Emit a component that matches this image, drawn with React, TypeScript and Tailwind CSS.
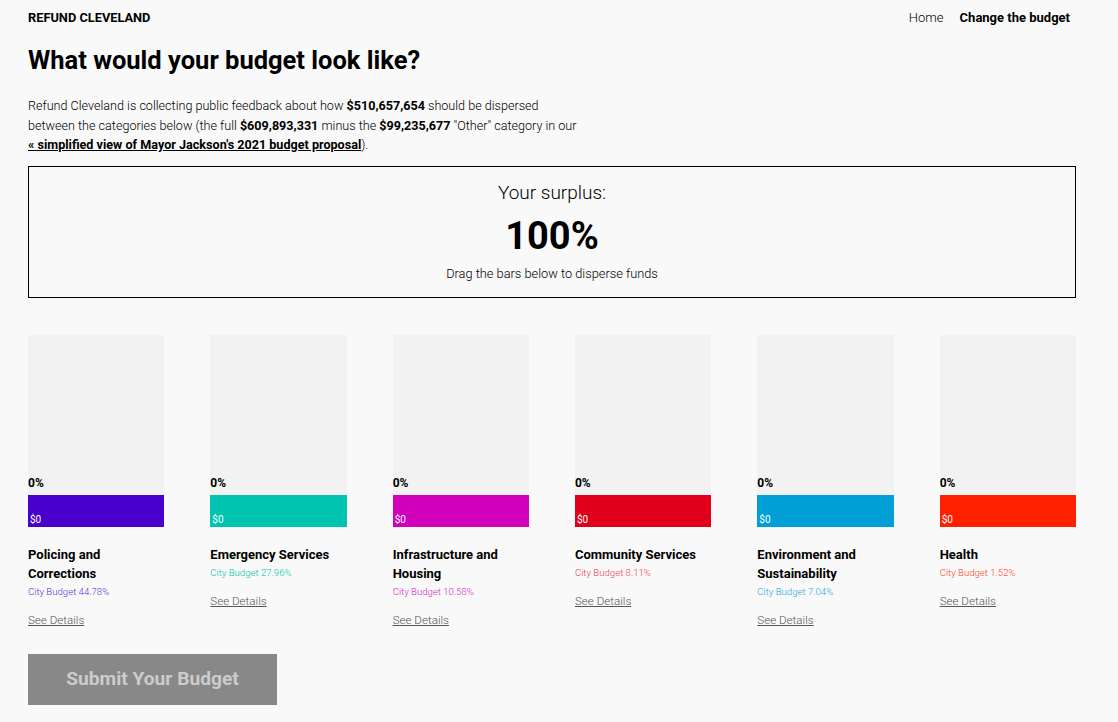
import React from "react";

interface Category {
  name: string;
  share: string;
  color: string;
  text: string;
}

const categories: Category[] = [
  { name: "Policing and Corrections", share: "44.78%", color: "bg-[#4a00cc]", text: "text-[#5b2ee0]" },
  { name: "Emergency Services", share: "27.96%", color: "bg-[#00c4b0]", text: "text-[#00c4b0]" },
  { name: "Infrastructure and Housing", share: "10.58%", color: "bg-[#d100bb]", text: "text-[#d41ec4]" },
  { name: "Community Services", share: "8.11%", color: "bg-[#e0001b]", text: "text-[#ef3b4a]" },
  { name: "Environment and Sustainability", share: "7.04%", color: "bg-[#009fd6]", text: "text-[#1aa8dc]" },
  { name: "Health", share: "1.52%", color: "bg-[#ff2000]", text: "text-[#ff3d1f]" },
];

const BudgetColumn: React.FC<{ item: Category }> = ({ item }) => {
  return (
    <div className="flex flex-col">
      <div className="flex flex-col h-[192px]">
        <div className="flex-1 bg-[#f2f2f2] flex items-end pb-[3px]">
          <span className="text-[12px] font-bold leading-[18px] text-black">0%</span>
        </div>
        <div className={`h-[32px] ${item.color} flex items-end px-[2px] pb-[1px]`}>
          <span className="text-[10px] text-white leading-[12px]">$0</span>
        </div>
      </div>
      <div className="mt-[18px] text-[13px] font-bold leading-[19px] text-black">{item.name}</div>
      <div className={`text-[9.6px] font-light leading-[14px] mt-[2px] ${item.text}`}>
        City Budget {item.share}
      </div>
      <a className="mt-[13px] text-[11.6px] font-light text-[#555] underline leading-[16px] w-fit">
        See Details
      </a>
    </div>
  );
};

export default function App() {
  return (
    <div className="min-h-screen bg-[#f9f9f9] text-black font-['Roboto','Liberation_Sans',sans-serif]">
      <div className="pl-[28px] pr-[42px]">
        <header className="flex justify-between items-center h-[36px]">
          <div className="text-[12.8px] font-bold">REFUND CLEVELAND</div>
          <nav className="flex gap-[16px] text-[13px] pr-[6px]">
            <a className="font-light">Home</a>
            <a className="font-bold">Change the budget</a>
          </nav>
        </header>

        <h1 className="text-[25.5px] font-bold leading-[30px] mt-[9px]">What would your budget look like?</h1>

        <p className="mt-[21px] text-[12.6px] font-light leading-[19.5px] max-w-[620px]">
          Refund Cleveland is collecting public feedback about how <b className="font-bold">$510,657,654</b> should
          be dispersed
          <br />
          between the categories below (the full <b className="font-bold">$609,893,331</b> minus the{" "}
          <b className="font-bold">$99,235,677</b> "Other" category in our
          <br />
          <a className="font-bold underline">« simplified view of Mayor Jackson's 2021 budget proposal</a>).
        </p>

        <div className="mt-[11px] border border-black h-[132px] flex flex-col items-center pt-[13px]">
          <div className="text-[19px] font-light leading-[26px]">Your surplus:</div>
          <div className="text-[38px] font-bold leading-[44px] mt-[8px]">100%</div>
          <div className="text-[12.8px] font-light leading-[16px] mt-[8px]">Drag the bars below to disperse funds</div>
        </div>

        <div className="grid grid-cols-6 gap-[46px] mt-[37px]">
          {categories.map((c) => (
            <BudgetColumn key={c.name} item={c} />
          ))}
        </div>

        <button className="mt-[26px] w-[249px] h-[51px] bg-[#888888] text-[#cccccc] text-[19.2px] font-bold">
          Submit Your Budget
        </button>
      </div>
    </div>
  );
}
